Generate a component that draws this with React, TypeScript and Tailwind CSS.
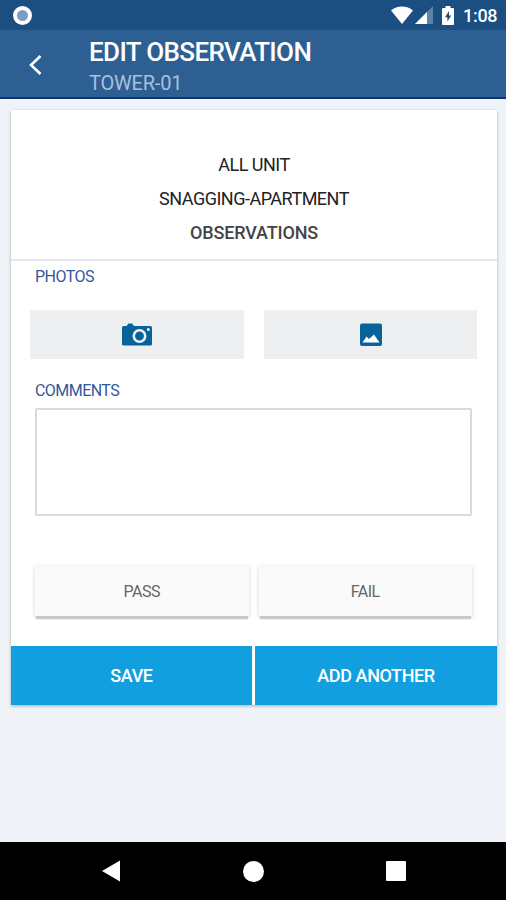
import type { ReactNode } from 'react';

function StatusBar() {
  return (
    <div className="flex h-[30px] items-center justify-between bg-[#1b4e81] pr-[9px] pl-[13px]">
      <span className="h-[19px] w-[19px] rounded-full border-4 border-white bg-[#7f9cc0]" />
      <div className="flex items-center">
        <svg className="mr-[2px]" width="22" height="18" viewBox="0 0 22 18" fill="#fff">
          <path d="M0 4.6C3 1.8 6.8 0.4 11 0.4S19 1.8 22 4.6L11 18Z" />
        </svg>
        <svg className="mr-[9px]" width="18" height="18" viewBox="0 0 18 18">
          <path d="M18 0V18H0Z" fill="#5f84ac" />
          <path d="M12 6V18H0Z" fill="#fff" />
        </svg>
        <svg className="mr-[9px]" width="12" height="19" viewBox="0 0 12 19">
          <path d="M3.5 0h5v2H11a1 1 0 0 1 1 1v15a1 1 0 0 1-1 1H1a1 1 0 0 1-1-1V3a1 1 0 0 1 1-1h2.5Z" fill="#fff" />
          <path d="M7 5L3 11.2h2.4V15.5L9.2 9.4H7Z" fill="#1b4e81" />
        </svg>
        <span className="w-[34px] pt-px text-[18px] leading-[30px] font-medium tracking-[-0.3px] whitespace-nowrap text-white">
          1:08
        </span>
      </div>
    </div>
  );
}

function Header() {
  return (
    <header className="flex h-[69px] border-b-2 border-[#0f3579] bg-[#2d5f93]">
      <svg className="mt-[25px] ml-[29px]" width="13" height="20" viewBox="0 0 13 20" fill="none" stroke="#fff" strokeWidth="2.6">
        <path d="M11.5 1L2 10L11.5 19" />
      </svg>
      <div className="ml-[47px] whitespace-nowrap">
        <h1 className="mt-[7px] text-[26px] leading-[31px] font-medium tracking-[-0.63px] text-white">EDIT OBSERVATION</h1>
        <p className="mt-[2px] text-[20px] leading-[26px] tracking-[-0.2px] text-[#a9c0dc]">TOWER-01</p>
      </div>
    </header>
  );
}

function SectionTitle({ children }: { children: ReactNode }) {
  return <h2 className="ml-[24px] text-[16px] leading-[20px] tracking-[-0.55px] text-[#35579a]">{children}</h2>;
}

function PhotoButton({ label, children }: { label: string; children: ReactNode }) {
  return (
    <button aria-label={label} className="flex h-[49px] flex-1 items-center justify-center bg-[#edeff0]">
      {children}
    </button>
  );
}

function ResultButton({ children }: { children: ReactNode }) {
  return (
    <button className="h-[50px] flex-1 bg-[#fafafa] pt-[2px] text-[16px] tracking-[-0.5px] text-[#666] shadow-[0_4px_1px_-1px_#c8c8c8,0_1px_4px_rgba(0,0,0,0.18)]">
      {children}
    </button>
  );
}

function NavigationBar() {
  return (
    <nav className="flex h-[58px] items-center bg-black">
      <svg className="ml-[102px]" width="18" height="22" viewBox="0 0 18 22" fill="#fff">
        <path d="M18 0.5V21.5L0 11Z" />
      </svg>
      <span className="ml-[123px] h-[21px] w-[21px] rounded-full bg-white" />
      <span className="ml-[122px] h-[20px] w-[20px] rounded-[1px] bg-white" />
    </nav>
  );
}

export default function App() {
  return (
    <div className="flex h-[900px] w-[506px] flex-col overflow-hidden bg-[#eff3f7] font-['Roboto',sans-serif]">
      <StatusBar />
      <Header />
      <main className="flex-1 pt-[11px] pr-[9px] pl-[11px]">
        <div className="flex h-[595px] flex-col bg-white shadow-[0_1px_3px_rgba(0,0,0,0.28)]">
          <div className="h-[151px] border-b-2 border-[#e6e8e9] pt-[38px] text-center text-[18px] leading-[34px] tracking-[-0.5px] text-[#222]">
            <p>ALL UNIT</p>
            <p>SNAGGING-APARTMENT</p>
            <p className="font-medium tracking-[-0.15px] text-[#444]">OBSERVATIONS</p>
          </div>
          <div className="mt-[6px]">
            <SectionTitle>PHOTOS</SectionTitle>
          </div>
          <div className="mt-[23px] mr-[20px] ml-[19px] flex gap-[20px]">
            <PhotoButton label="Camera">
              <svg width="30" height="23" viewBox="0 0 30 23">
                <path d="M1.500 3H4.500L6.500 0.500H10L12 3H28.500A1.500 1.500 0 0 1 30 4.500V21A1.500 1.500 0 0 1 28.500 22.500H1.500A1.500 1.500 0 0 1 0 21V4.500A1.500 1.500 0 0 1 1.500 3Z" fill="#08639b" />
                <circle cx="17.500" cy="13" r="5.700" fill="none" stroke="#edf2f6" strokeWidth="2.500" />
                <circle cx="26.300" cy="6.500" r="1.500" fill="#edf2f6" />
              </svg>
            </PhotoButton>
            <PhotoButton label="Gallery">
              <svg className="ml-px" width="22" height="23" viewBox="0 0 22 23">
                <rect y="0.500" width="22" height="22.500" rx="2" fill="#08639b" />
                <path d="M2.500 19.500L6.500 13.500L9 16L14 11.500L19.500 19.500Z" fill="#fff" />
              </svg>
            </PhotoButton>
          </div>
          <div className="mt-[22px]">
            <SectionTitle>COMMENTS</SectionTitle>
          </div>
          <textarea
            aria-label="Comments"
            className="mt-[7px] mr-[25px] ml-[24px] h-[108px] resize-none rounded-[2px] border-2 border-[#d3dce4] outline-none"
          />
          <div className="mt-[50px] mr-[25px] ml-[24px] flex gap-[10px]">
            <ResultButton>PASS</ResultButton>
            <ResultButton>FAIL</ResultButton>
          </div>
          <div className="mt-auto flex h-[59px] gap-[3px] text-[18px] font-medium tracking-[-0.4px] text-white">
            <button className="w-[241px] bg-[#129fdf]">SAVE</button>
            <button className="flex-1 bg-[#129fdf]">ADD ANOTHER</button>
          </div>
        </div>
      </main>
      <NavigationBar />
    </div>
  );
}
